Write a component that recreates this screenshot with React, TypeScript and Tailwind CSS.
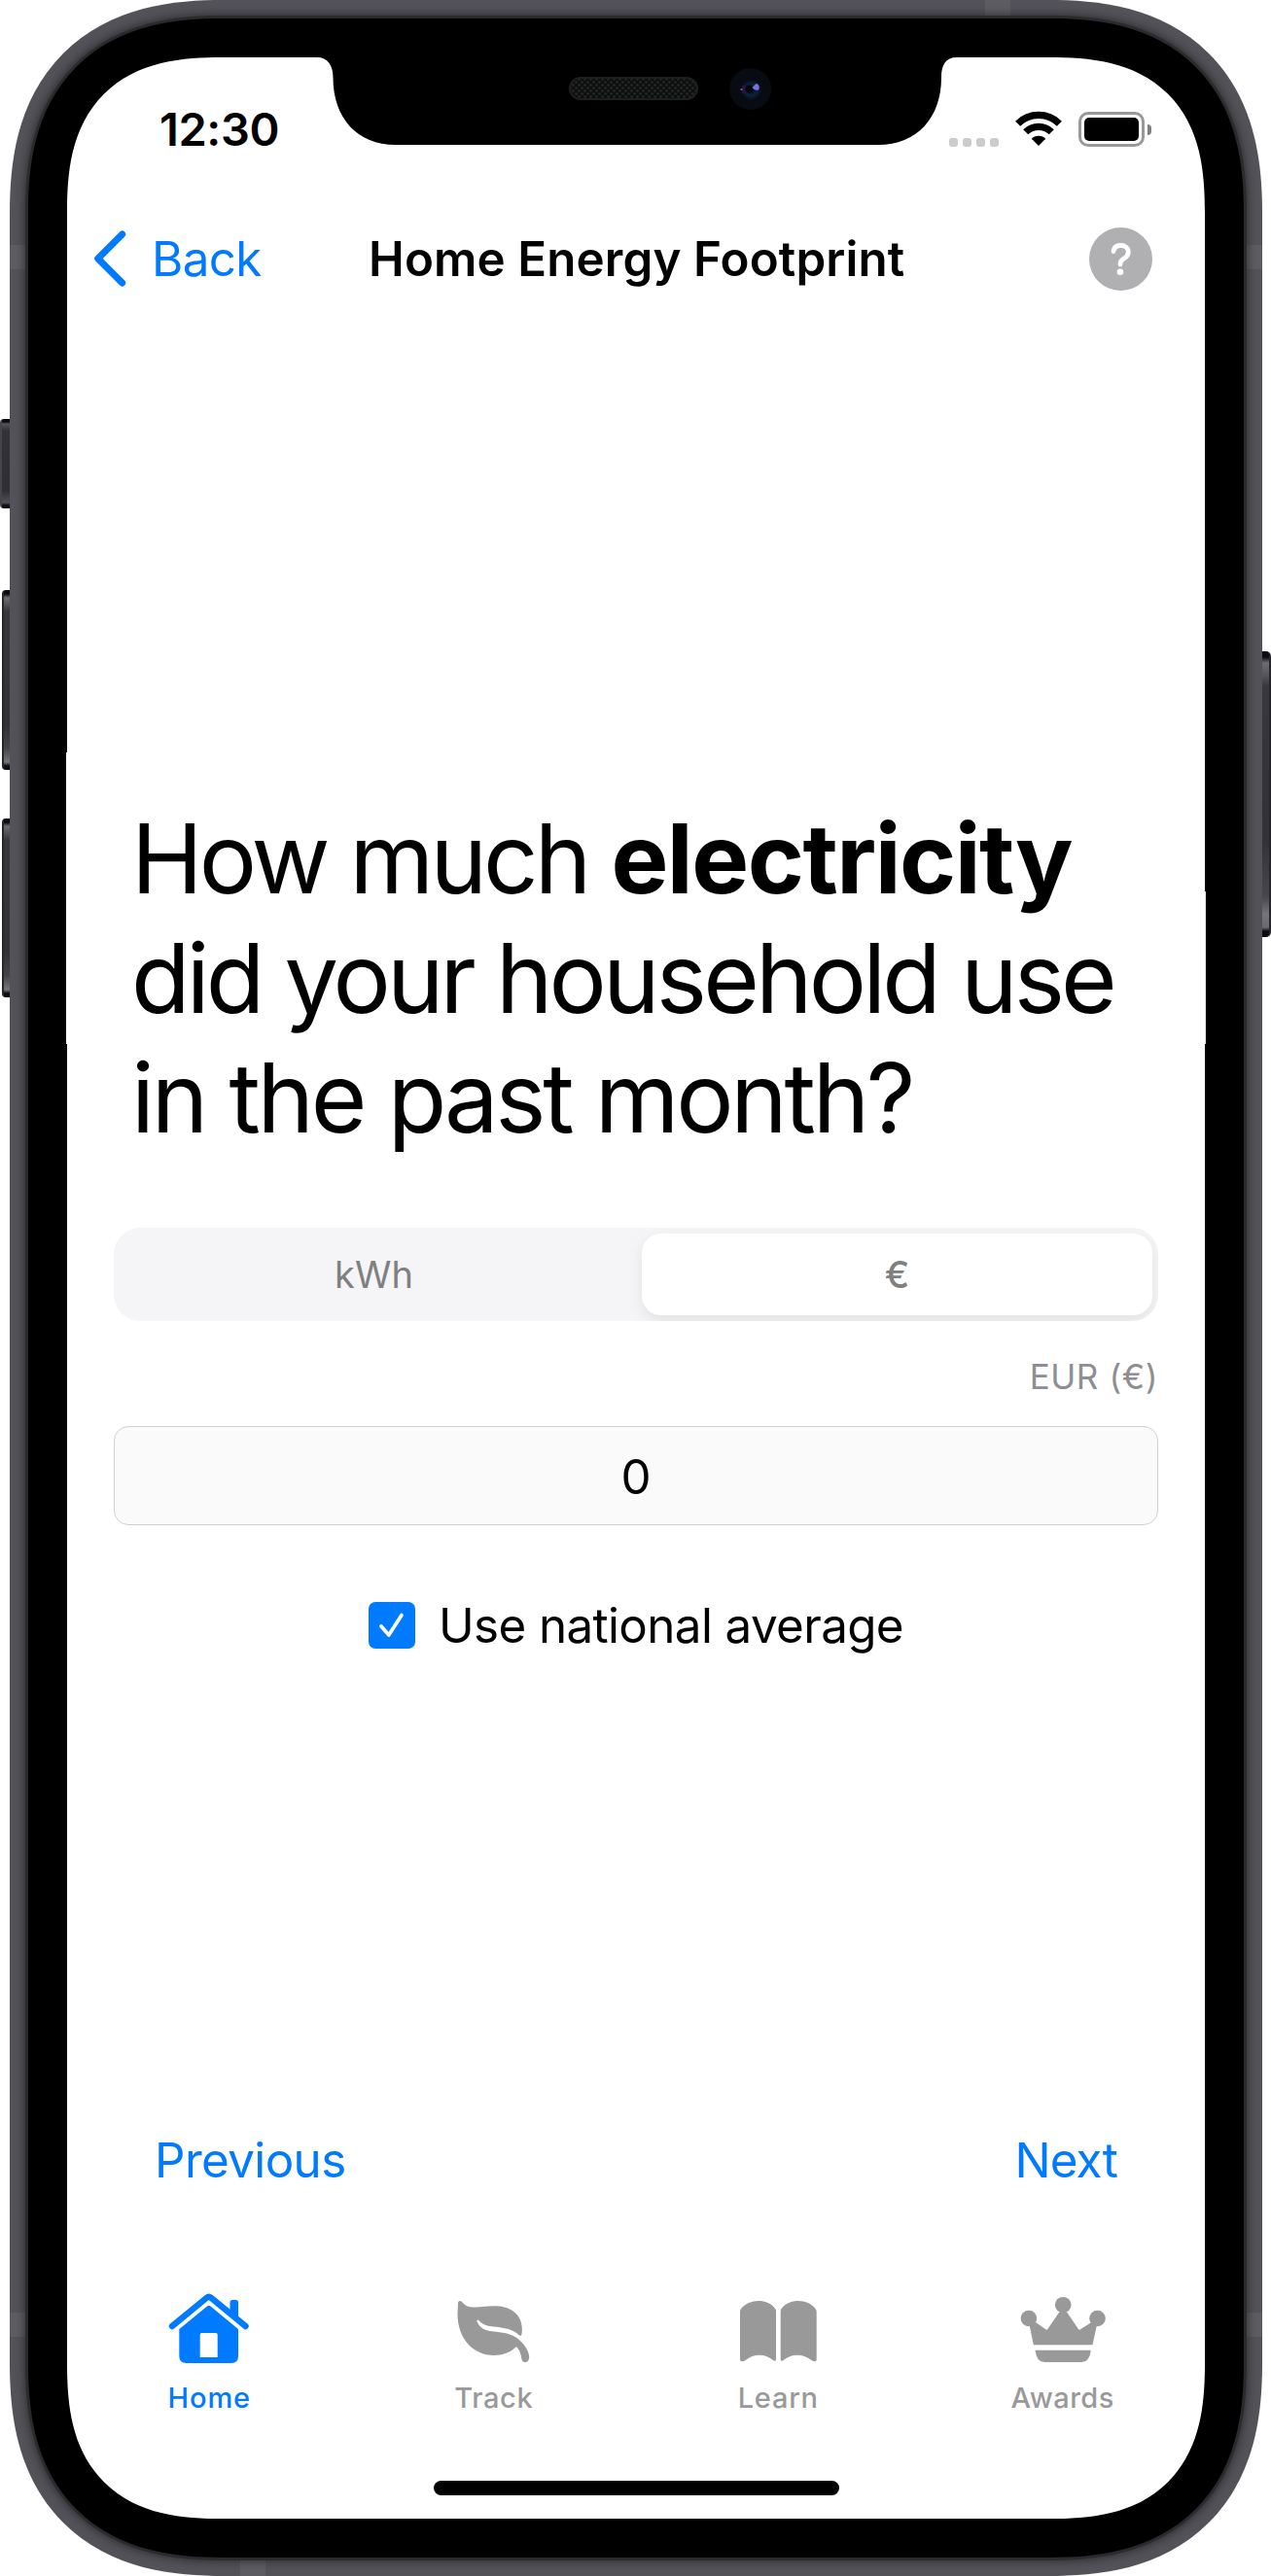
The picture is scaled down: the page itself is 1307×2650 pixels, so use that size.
import React from "react";

function Notch() {
  return (
    <svg className="absolute left-0 top-0" width="1170" height="92" viewBox="0 0 1170 92">
      <defs>
        <pattern id="mesh" width="6" height="6" patternUnits="userSpaceOnUse">
          <rect width="6" height="6" fill="#0e0f0f" />
          <circle cx="1.5" cy="1.5" r="1.3" fill="#262727" />
          <circle cx="4.5" cy="4.5" r="1.3" fill="#262727" />
        </pattern>
        <radialGradient id="lens">
          <stop offset="0" stopColor="#04070f" />
          <stop offset="0.55" stopColor="#07263c" />
          <stop offset="1" stopColor="#0a0c14" />
        </radialGradient>
      </defs>
      <path
        d="M257 -2V0C268 0 273.5 8 273.5 21C273.5 62 298 90 338 90H834C874 90 899 62 899 21C899 8 903 0 915 0V-2Z"
        fill="#000"
      />
      <rect x="517" y="21" width="131" height="22" rx="11" fill="url(#mesh)" stroke="#1e1f1f" strokeWidth="2" />
      <circle cx="702.7" cy="32.5" r="21.5" fill="#090b12" />
      <circle cx="703.5" cy="33.5" r="10.5" fill="url(#lens)" />
      <ellipse cx="696" cy="33" rx="2.5" ry="4.5" fill="#2c1048" />
      <circle cx="693.5" cy="33" r="1.1" fill="#667373" />
      <circle cx="701.5" cy="32.5" r="4" fill="#05060c" />
      <path d="M704.500 31L708.500 27C711.5 27.500 712.5 30.500 711 33.500C708.500 34 706 33.500 704.500 31Z" fill="#7573e0" />
    </svg>
  );
}

function Wifi() {
  return (
    <svg width="48" height="36" viewBox="0 0 48 36" className="mb-0.5">
      <g fill="none" stroke="#000" strokeWidth="7.2">
        <path d="M2.600 13.200A30.500 30.500 0 0 1 45.400 13.200" />
        <path d="M10.700 21.800A18.800 18.800 0 0 1 37.300 21.800" />
      </g>
      <path d="M24 36L17.300 29.300C17 28.900 17 28.500 17.400 28.100C21.200 25 26.800 25 30.600 28.100C31 28.500 31 28.900 30.700 29.300Z" fill="#000" />
    </svg>
  );
}

function StatusBar() {
  return (
    <div className="flex h-[148px] items-center pl-[95px] pr-[55px]">
      <span className="text-[47px] font-semibold leading-[60px] tracking-[-0.4px]">12:30</span>
      <div className="ml-auto flex h-9 items-center">
        <div className="mr-[17px] flex gap-[5px] self-end">
          <i className="h-[9px] w-[9px] rounded-[3px] bg-[#cccccc]" />
          <i className="h-[9px] w-[9px] rounded-[3px] bg-[#cccccc]" />
          <i className="h-[9px] w-[9px] rounded-[3px] bg-[#cccccc]" />
          <i className="h-[9px] w-[9px] rounded-[3px] bg-[#cccccc]" />
        </div>
        <Wifi />
        <div className="ml-[17px] h-9 w-[68px] rounded-[10px] border-[3px] border-[#999999] p-[3px]">
          <div className="h-full rounded-[5px] bg-black" />
        </div>
        <div className="ml-[3px] h-[11px] w-1 rounded-r-full bg-[#808080]" />
      </div>
    </div>
  );
}

function NavBar() {
  return (
    <div className="flex h-[118px] items-center pl-7 pr-[54px]">
      <svg width="33" height="58" viewBox="0 0 33 58" fill="none" stroke="#007aff" strokeWidth="7" strokeLinecap="round" strokeLinejoin="round">
        <path d="M28.700 4L3.700 29L28.700 54" />
      </svg>
      <span className="ml-[26px] w-[112px] text-[49.3px] leading-[60px] tracking-[-0.6px] text-[#007aff]">Back</span>
      <h2 className="ml-[111px] whitespace-nowrap text-[49.3px] font-semibold leading-[60px] tracking-[0.12px]">
        Home Energy Footprint
      </h2>
      <svg width="65" height="65" viewBox="0 0 65 65" className="ml-auto" fill="none">
        <circle cx="32.500" cy="32.500" r="32.500" fill="#b0b0b3" />
        <path
          d="M25 24.500C25.500 20.500 28.500 18.500 32.600 18.500C37 18.500 40.300 21 40.300 25.200C40.300 28.500 38.500 30.200 36 31.800C33.400 33.500 32 34.800 32 37.200V38"
          stroke="#fff"
          strokeWidth="4.800"
          strokeLinecap="round"
          strokeLinejoin="round"
        />
        <circle cx="31.900" cy="45.700" r="3.300" fill="#fff" />
      </svg>
    </div>
  );
}

function HomeIcon() {
  return (
    <svg width="100" height="80" viewBox="0 0 100 80" fill="currentColor">
      <path d="M12 39L47.700 9.600Q49.700 8 51.700 9.600L87.500 39" fill="none" stroke="currentColor" strokeWidth="6.400" strokeLinecap="round" strokeLinejoin="round" />
      <path d="M71.500 26V14.500Q71.500 12 74 12H77.500Q80 12 80 14.500V33Z" />
      <path
        fillRule="evenodd"
        d="M49.700 17.700Q50.500 17.700 51.500 18.500L80 42V70Q80 77 73 77H26.500Q19.300 77 19.300 70V42L48 18.500Q49 17.700 49.700 17.700ZM42.500 46Q40.700 46 40.700 48V71H58.700V48Q58.700 46 57 46Z"
      />
    </svg>
  );
}

function LeafIcon() {
  return (
    <svg width="100" height="80" viewBox="0 0 100 80" fill="currentColor">
      <path d="M13 15C13.300 12.500 15.500 12.300 17 14C21 18.500 25 19.800 31 19.600C38 19.300 44 18 52.500 18.300C69 19 81.500 29 78.400 47.500C78.200 49 77 49.200 75.800 48.200C70 43 63 41.200 56 40.300C45 39 40 38.800 34.500 33.200C33 31.700 31.800 33 32.700 34.800C36 41.500 41 43.500 48 44.300C60 45.500 68 47 74 51.500C79.500 55.500 86.300 64 86.200 71C86 75 83.500 76.500 81.500 76C78.800 75.500 78.400 73 77.800 69.500C77 65.500 75.500 62.500 72.800 60C68 66 58 69 50 69C28 69 12.500 51 12.500 26.500Z" />
    </svg>
  );
}

function BookIcon() {
  return (
    <svg width="100" height="80" viewBox="0 0 100 80" fill="currentColor">
      <path d="M11 24Q11 22.500 12 21.300C20 10.400 39.500 10.400 47 20.800Q48 22 48 23.500V73C48 75 46.500 75.300 45 74C36.500 67 25.500 67 16.500 74C13.500 76 11 75.500 11 73Z" />
      <path d="M52.700 23.500Q52.700 22 53.700 20.800C61.500 10.400 81 10.400 88.700 21.300Q89.700 22.500 89.700 24V73C89.700 75.500 87.200 76 84.500 74C75.500 67 64 67 55.700 74C54.200 75.300 52.700 75 52.700 73Z" />
    </svg>
  );
}

function CrownIcon() {
  return (
    <svg width="100" height="80" viewBox="0 0 100 80" fill="currentColor">
      <circle cx="50.200" cy="17.200" r="8.300" />
      <circle cx="14.900" cy="31" r="8.300" />
      <circle cx="85.500" cy="31" r="8.300" />
      <path d="M15.600 38L19.800 58.300H80.500L84.900 38L79 35.300L67.600 42.600Q66.800 43 66.200 42.300L54 24.500H46.300L34.200 42.300Q33.500 43 32.700 42.500L22 35Z" />
      <path d="M21.500 63.700H78.800Q77.300 76 69.500 76H31Q23 76 21.500 63.700Z" />
    </svg>
  );
}

function Tab({ label, icon, active, tracking }: { label: string; icon: React.ReactNode; active?: boolean; tracking: string }) {
  return (
    <div className={`flex flex-1 flex-col items-center ${active ? "text-[#007aff]" : "text-[#999999]"}`}>
      {icon}
      <span className={`mt-[15px] text-[29px] font-medium leading-9 ${tracking}`}>{label}</span>
    </div>
  );
}

function Screen() {
  return (
    <div className="relative h-full overflow-hidden rounded-[160px] bg-white [corner-shape:superellipse(1.36)]">
      <Notch />
      <StatusBar />
      <NavBar />

      <h1 className="ml-[66px] mt-[497px] whitespace-nowrap text-[99px] leading-[123px] tracking-[-3.87px]">
        How much <b className="font-bold tracking-[-1.5px]">electricity</b>
        <br />
        did your household use
        <br />
        <span className="tracking-[-3.3px]">in the past month?</span>
      </h1>

      <div className="mx-12 mt-[72px] grid h-24 grid-cols-2 overflow-hidden rounded-[27px] bg-[#f5f5f8] text-[38px] leading-[48px] text-[#808080]">
        <div className="flex items-center justify-center pr-0.5">kWh</div>
        <div className="m-1.5 flex items-center justify-center rounded-[20px] bg-white font-medium shadow-[0_6px_16px_rgba(0,0,0,0.08)]">
          €
        </div>
      </div>

      <div className="mx-12 mt-[33px] text-right text-[35px] leading-[48px] tracking-[0.58px] text-[#8e8e93]">EUR (€)</div>

      <div className="mx-12 mt-[27px] flex h-[102px] items-center justify-center rounded-[15px] border border-[#d0d0d0] bg-[#fafafa] pt-0.5 text-[49.3px] leading-[60px]">
        0
      </div>

      <div className="mt-[73px] flex h-[60px] items-center justify-center gap-6">
        <div className="flex h-12 w-12 items-center justify-center rounded-[7px] bg-[#007aff]">
          <svg width="28" height="28" viewBox="0 0 28 28" fill="none" stroke="#fff" strokeWidth="3.700" strokeLinecap="round" strokeLinejoin="round">
            <path d="M3 15L10.800 24L24 3.500" />
          </svg>
        </div>
        <span className="text-[49.3px] leading-[60px] tracking-[-0.6px]">Use national average</span>
      </div>

      <div className="mt-[490px] flex h-[60px] justify-between px-[90px] text-[49.3px] leading-[60px] text-[#007aff]">
        <span className="tracking-[-0.6px]">Previous</span>
        <span className="tracking-[-0.8px]">Next</span>
      </div>

      <div className="mt-[102px] flex">
        <Tab label="Home" active icon={<HomeIcon />} tracking="tracking-[0.9px]" />
        <Tab label="Track" icon={<LeafIcon />} tracking="tracking-[0.65px]" />
        <Tab label="Learn" icon={<BookIcon />} tracking="tracking-[0.8px]" />
        <Tab label="Awards" icon={<CrownIcon />} tracking="tracking-[0.53px]" />
      </div>

      <div className="mx-auto mt-[67px] h-[15px] w-[417px] rounded-full bg-black" />
    </div>
  );
}

const leftKey =
  "absolute left-[2px] w-6 rounded-[4px] border-l-2 border-[#26252b] bg-[linear-gradient(to_bottom,#0c0c10_0,#0c0c10_4px,#6d6c73_8px,#38373d_22px,#323137_75%,#45444a_88%,#76757b_calc(100%-8px),#0c0c10_calc(100%-4px))]";

export default function App() {
  return (
    <div className="relative h-[2650px] w-[1307px] overflow-hidden bg-white pl-[10px] pr-[9px] font-[Inter,sans-serif] text-black">
      <div className="absolute left-0 top-[431px] h-[92px] w-6 rounded-[4px] border-l-2 border-[#45444a] bg-[linear-gradient(to_bottom,#0c0c10_0,#0c0c10_3px,#55545a_5px,#323137_12px,#2f2e34_80%,#505056_calc(100%-6px),#0c0c10_calc(100%-3px))]" />
      <div className={`${leftKey} top-[607px] h-[185px]`} />
      <div className={`${leftKey} top-[842px] h-[184px]`} />
      <div className="absolute right-0 top-[670px] h-[294px] w-6 rounded-[5px] border-r-2 border-[#26252b] bg-[linear-gradient(to_bottom,#0c0c10_0,#0c0c10_6px,#6d6c73_12px,#55545a_25px,#38373d_36px,#323137_65%,#48474d_86%,#76757b_92%,#6b6a70_calc(100%-10px),#0c0c10_calc(100%-6px))]" />

      <div className="relative h-full overflow-hidden rounded-[220px] bg-[#535259] p-4 [corner-shape:superellipse(1.27)]">
        <div className="absolute left-0 top-[252px] h-[25px] w-5 bg-[#5d5c63]" />
        <div className="absolute right-0 top-[252px] h-[25px] w-5 bg-[#5d5c63]" />
        <div className="absolute left-0 top-[2379px] h-[25px] w-5 bg-[#5d5c63]" />
        <div className="absolute right-0 top-[2379px] h-[25px] w-5 bg-[#5d5c63]" />
        <div className="absolute left-[1003px] top-0 h-5 w-[26px] bg-[#5d5c63]" />
        <div className="absolute bottom-0 left-[237px] h-5 w-[26px] bg-[#5d5c63]" />
        <div className="relative h-full rounded-[204px] bg-[#2b2b2b] p-[3px] shadow-[0_0_9px_1px_rgba(20,20,24,0.6)] [corner-shape:superellipse(1.28)]">
          <div className="relative h-full rounded-[200px] bg-black p-10 [corner-shape:superellipse(1.28)]">
            <div className="absolute left-[39px] top-[755px] h-[300px] w-[2px] bg-white" />
            <div className="absolute right-[39px] top-[898px] h-[157px] w-[2px] bg-[#e8e8e8]" />
            <Screen />
          </div>
        </div>
      </div>
    </div>
  );
}
